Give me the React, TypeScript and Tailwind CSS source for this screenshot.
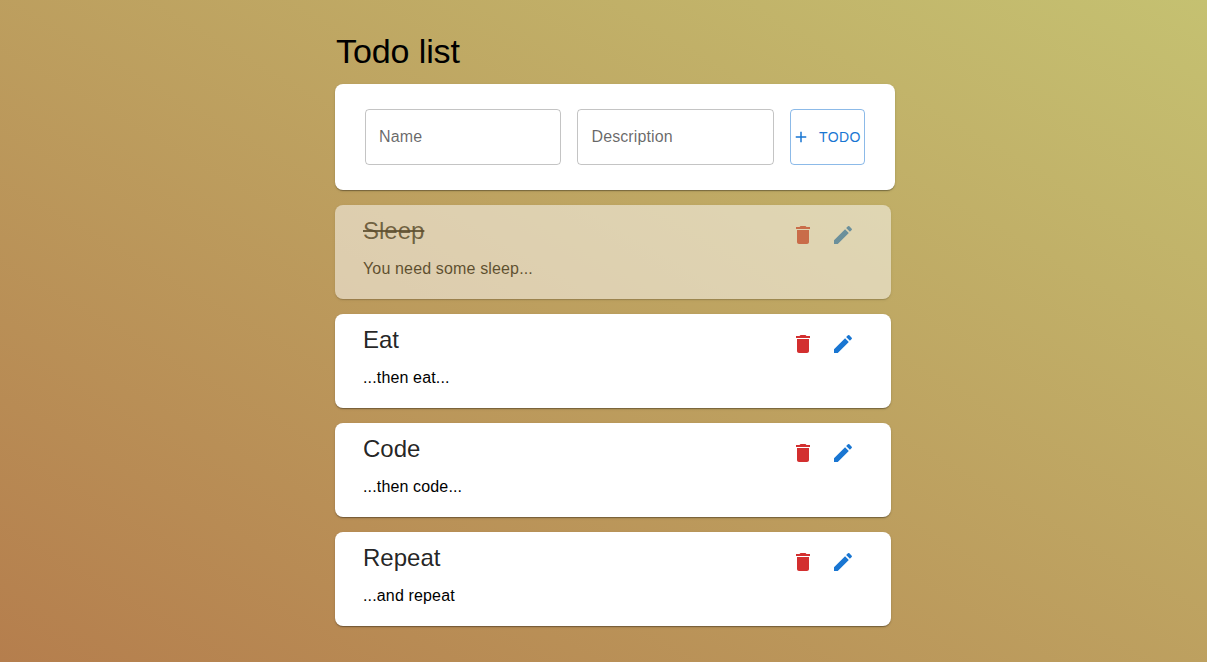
const todos = [
  { title: "Sleep", text: "You need some sleep...", done: true },
  { title: "Eat", text: "...then eat...", done: false },
  { title: "Code", text: "...then code...", done: false },
  { title: "Repeat", text: "...and repeat", done: false },
];

const shadow =
  "shadow-[0px_2px_1px_-1px_rgba(0,0,0,0.2),0px_1px_1px_0px_rgba(0,0,0,0.14),0px_1px_3px_0px_rgba(0,0,0,0.12)]";

function Icon({ d, className }: { d: string; className: string }) {
  return (
    <svg viewBox="0 0 24 24" fill="currentColor" className={className}>
      <path d={d} />
    </svg>
  );
}

const deletePath =
  "M6 19c0 1.1.9 2 2 2h8c1.1 0 2-.9 2-2V7H6v12zM19 4h-3.5l-1-1h-5l-1 1H5v2h14V4z";
const editPath =
  "M3 17.25V21h3.75L17.81 9.94l-3.75-3.75L3 17.25zM20.71 7.04c.39-.39.39-1.02 0-1.41l-2.34-2.34a.9959.9959 0 0 0-1.41 0l-1.83 1.83 3.75 3.75 1.83-1.83z";
const addPath = "M19 13h-6v6h-2v-6H5v-2h6V5h2v6h6v2z";

export default function App() {
  return (
    <div className="flex h-[662px] justify-center bg-[linear-gradient(30deg,#b57e4d,#c5c171)] font-['Liberation_Sans',Arial,sans-serif] text-black/87">
      <main className="ml-[23px] w-[560px] pt-[30px]">
        <h1 className="h-[42px] pl-px text-[34px] leading-[42px] tracking-[-0.1px] text-black">Todo list</h1>
        <form className={`mt-3 flex h-[106px] gap-4 rounded-lg bg-white px-[30px] pt-[25px] ${shadow}`}>
          <input
            placeholder="Name"
            className="h-14 w-[196px] rounded border border-black/23 px-[13px] text-base tracking-[0.15px] placeholder:text-black/60"
          />
          <input
            placeholder="Description"
            className="h-14 w-[197px] rounded border border-black/23 px-[13.5px] text-base tracking-[0.1px] placeholder:text-black/60"
          />
          <button
            type="button"
            className="flex h-14 w-[75px] items-center rounded border border-[#1976d2]/50 pl-px text-sm tracking-[0.4px] text-[#1976d2]"
          >
            <Icon d={addPath} className="mr-[9px] size-[18px] shrink-0" />
            TODO
          </button>
        </form>
        <ul className="mt-[15px] flex w-[556px] flex-col gap-[15px]">
          {todos.map((todo) => (
            <li
              key={todo.title}
              className={`flex h-[94px] justify-between rounded-lg bg-white pt-[10px] pr-9 pl-7 ${shadow} ${todo.done ? "opacity-50" : ""}`}
            >
              <div>
                <h2 className={`text-2xl leading-8 ${todo.done ? "line-through" : ""}`}>{todo.title}</h2>
                <p className="mt-[10px] text-base leading-6 tracking-[0.15px] text-black">{todo.text}</p>
              </div>
              <div className="flex gap-4 pt-2">
                <Icon d={deletePath} className="size-6 text-[#d32f2f]" />
                <Icon d={editPath} className="size-6 text-[#1976d2]" />
              </div>
            </li>
          ))}
        </ul>
      </main>
    </div>
  );
}
